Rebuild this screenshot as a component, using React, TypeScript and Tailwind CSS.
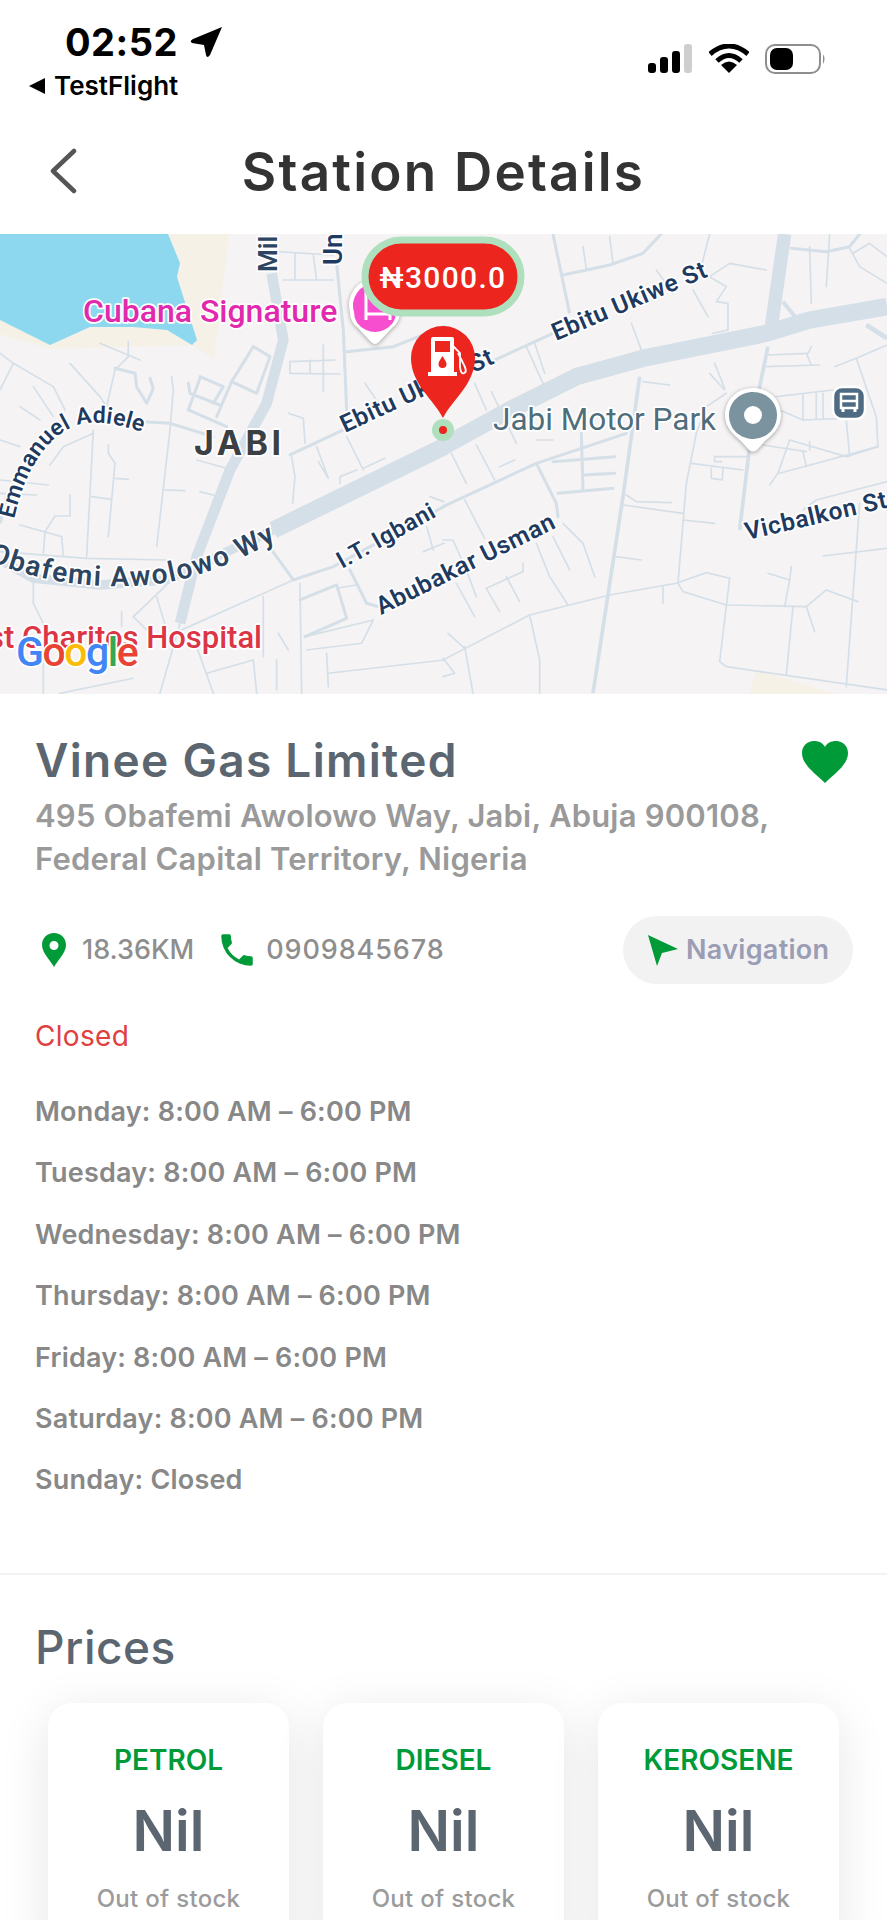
const leftThin = [
  '0,370 40,400 160,470 195,540', '40,400 0,480', '100,470 160,560', '210,400 300,500 320,530', '300,340 420,390',
  '385,335 385,380 345,420 320,530', '515,440 520,480 510,600 470,950', '60,530 120,570', '0,630 60,650', '280,600 260,980',
  '280,610 190,650 150,705', '325,645 325,670 345,700 325,920', '345,745 385,748', '275,800 335,808',
  '210,795 210,858 165,858 135,905 130,970', '60,885 185,920 190,975', '0,750 145,765', '0,790 110,795', '495,780 555,782', '600,785 650,798',
  '590,690 680,715', '850,150 1000,150', '885,70 885,150', '940,75 950,150', '830,65 1000,75', '870,395 1005,390',
  '870,430 1020,432', '870,395 870,430', '930,390 930,430', '970,345 970,485', '865,550 910,565 915,640',
  '875,680 885,740 878,820', '1095,460 1150,540', '950,650 985,745 955,695', '1020,760 1020,740 1070,720', '1090,715 1155,685',
  '1040,620 1090,720', '0,965 260,985 500,990', '100,1060 100,1120 140,1200', '880,1050 500,1220', '400,1160 500,1065',
  '400,1160 440,1200', '470,1100 500,1200', '365,1145 365,1190', '1010,1075 1070,1065', '915,1220 1120,1170 1085,1240 920,1260',
  '480,1390 540,1180', '590,1250 640,1390', '130,1250 130,1390', '180,1390 400,1345', '620,1330 760,1290 770,1390',
  '835,1210 865,1260', '830,1290 830,1380', '790,1100 790,1280', '900,1060 905,1390', '980,1270 985,1370', '985,1330 1332,1290',
  '1270,965 1332,940', '1290,800 1332,815', '1280,890 1300,960',
];

const leftMedium = [
  '345,415 405,430 410,470 440,520 460,475 450,445', '430,575 510,580 640,620', '600,440 670,470 640,520',
  '565,460 570,490 660,525', '565,540 600,445', '565,540 680,590', '760,350 810,380 770,490 695,455 760,350', '695,455 650,560',
  '1010,100 1030,300 1040,540', '1040,365 1180,350 1332,290', '870,675 1030,600', '815,960 880,1050 1000,1010 1332,830',
  '900,1110 1010,1065 1040,1165 915,1220', '1050,1020 1100,1120 1135,1130',
];

const rightThin = [
  '420,50 430,115', '500,20 510,100', '640,120 690,190', '565,280 597,365', '800,12 775,110', '860,100 970,120',
  '860,100 800,140 850,170 820,215 855,220 855,300 810,310', '750,180 795,260', '1100,50 1105,220', '1160,12 1150,170',
  '1220,55 1250,110 1332,160', '1230,70 1280,40 1332,80', '250,350 300,460', '275,340 305,430', '600,455 680,465',
  '800,430 845,480', '815,400 845,475', '975,375 1095,370 1105,350', '970,410 1130,405', '1090,370 1105,405',
  '850,490 790,530 760,610 730,760 705,1060', '1010,540 1080,570 1210,565', '1080,495 1080,570', '1120,490 1120,565',
  '1140,490 1140,565', '1000,500 1170,480', '1175,410 1240,385 1300,560 1305,650 1210,680 1040,630 1005,730 980,765',
  '1240,385 1332,345', '1210,570 1220,680', '1010,730 1305,650', '960,645 1090,665', '1100,635 1100,660', '1080,665 1090,710',
  '815,680 915,680', '815,680 815,695 835,695', '745,700 900,720', '805,715 805,745 838,750 840,715', '25,670 70,760',
  '100,645 155,750', '95,460 130,540', '145,485 220,640', '170,710 215,690', '280,630 330,630', '65,810 125,925',
  '0,930 30,930 70,1020 100,1100', '550,795 580,815 685,818', '540,825 720,850', '720,870 815,880', '520,980 595,990',
  '360,880 420,940 455,1040', '330,920 380,1020', '280,940 320,1040 375,1125', '130,1075 240,1025 240,1000', '130,1075 170,1145',
  '190,1040 230,1115', '40,1060 95,1160', '0,1290 260,1155 500,1095 700,1060 790,1028 860,1045', '260,1155 290,1290 290,1390',
  '660,1070 660,1120', '705,1060 720,1085 850,1125 1090,1130 1150,1080 1245,1115', '860,1045 830,1295 850,1310 1332,1380',
  '1250,820 1210,1370', '1050,1130 1030,1335', '975,1030 1040,1050 1045,1010', '1040,1050 1025,1130', '1090,1130 1115,1205',
  '1140,978 1332,955', '1080,840 1120,810 1332,755', '65,1250 90,1390', '15,1210 65,1255', '0,1285 35,1330 0,1340',
];

const rightMedium = [
  '360,135 500,105 600,70 655,12', '1045,55 1150,65 1220,50 1250,12', '90,420 330,310', '330,695 515,680', '415,610 420,780',
  '420,735 515,730', '345,790 510,775', '0,830 280,700 550,610', '280,700 340,820 345,860',
];

const hours = [
  'Monday: 8:00 AM – 6:00 PM',
  'Tuesday: 8:00 AM – 6:00 PM',
  'Wednesday: 8:00 AM – 6:00 PM',
  'Thursday: 8:00 AM – 6:00 PM',
  'Friday: 8:00 AM – 6:00 PM',
  'Saturday: 8:00 AM – 6:00 PM',
  'Sunday: Closed',
];

function Lines({ items, width }: { items: string[]; width: number }) {
  return (
    <>
      {items.map((p) => (
        <polyline key={p} points={p} fill="none" stroke="#d5dfe8" strokeWidth={width} strokeLinejoin="round" strokeLinecap="round" />
      ))}
    </>
  );
}

function StatusBar() {
  return (
    <div className="flex h-[116px] justify-between">
      <div className="pl-[28px] pt-[21px]">
        <div className="flex items-center pl-[37px]">
          <span className="text-[38px] leading-[42px] font-bold text-black font-['Inter',sans-serif] tracking-[0.5px]">02:52</span>
          <svg className="ml-[12px]" width="33" height="32" viewBox="0 0 33 32">
            <path d="M32 1 L20 29 Q17 33 16 29 L14 19 L2 17 Q-1 15 3 13 Z" fill="#000" />
          </svg>
        </div>
        <div className="mt-[8px] flex items-center">
          <svg width="18" height="18" viewBox="0 0 18 18">
            <path d="M17 1 V17 L1 9 Z" fill="#000" />
          </svg>
          <span className="ml-[8px] text-[26px] leading-[30px] font-semibold text-black font-['Inter',sans-serif]">TestFlight</span>
        </div>
      </div>
      <div className="flex items-start gap-[16px] pr-[60px] pt-[44px]">
        <svg width="45" height="29" viewBox="0 0 45 29">
          <rect x="0" y="19" width="8" height="10" rx="3" fill="#000" />
          <rect x="12" y="13" width="8" height="16" rx="3" fill="#000" />
          <rect x="24" y="7" width="8" height="22" rx="3" fill="#000" />
          <rect x="36" y="0" width="8" height="29" rx="3" fill="#cfcfcf" />
        </svg>
        <svg width="40" height="29" viewBox="0 0 40 29">
          <path d="M1 10 Q20 -6 39 10" fill="none" stroke="#000" strokeWidth="5" />
          <path d="M8 17 Q20 6 32 17" fill="none" stroke="#000" strokeWidth="5" />
          <path d="M12 21 Q20 14 28 21 L20 29 Z" fill="#000" />
        </svg>
        <svg width="62" height="30" viewBox="0 0 62 30">
          <rect x="1" y="1" width="54" height="28" rx="9" fill="#fff" stroke="#8e8e8e" strokeWidth="2" />
          <rect x="5" y="4" width="23" height="22" rx="7" fill="#000" />
          <path d="M58 10 Q61 15 58 20 Z" fill="#8e8e8e" />
        </svg>
      </div>
    </div>
  );
}

function Header() {
  return (
    <div className="relative flex h-[118px] items-center justify-center pb-[6px]">
      <svg className="absolute left-[48px] top-[32px]" width="30" height="46" viewBox="0 0 30 46">
        <path d="M26 3 L5 23 L26 43" fill="none" stroke="#555" strokeWidth="4.5" strokeLinecap="round" strokeLinejoin="round" />
      </svg>
      <h1 className="text-[53px] leading-[56px] font-semibold text-[#333] font-['Inter',sans-serif] tracking-[2.200px]">Station Details</h1>
    </div>
  );
}

const halo = { stroke: '#fff', strokeWidth: 3.5, paintOrder: 'stroke', strokeLinejoin: 'round' } as const;
const navy = '#1e3a5f';

function MapView() {
  return (
    <svg className="block" width="887" height="460" viewBox="0 0 887 460">
      <defs>
        <path id="emmanuel" d="M14 285 C24 240 44 206 72 193 C92 185 115 189 142 198" />
        <path id="obafemi" d="M-12 326 C40 350 110 358 170 348 C210 340 250 322 290 298" />
      </defs>
      <rect width="887" height="460" fill="#f5f3f4" />
      <polygon points="0,86 50,111 90,93 133,93 167,96 192,111 197,106 177,43 180,29 168,0 229,0 214,125 192,111 50,115 0,100" fill="#f5f1e6" />
      <polygon points="756,436 836,460 750,460" fill="#f5f1e6" />
      <polygon points="0,0 168,0 180,29 177,43 197,106 192,111 167,96 133,93 90,93 50,111 0,86" fill="#8dd8ee" />

      {/* roads traced from the crops, left half then right half */}
      <g transform="translate(0,-4) scale(0.3333)">
        <Lines items={leftThin} width={5} />
        <Lines items={leftMedium} width={9} />
        <polyline points="0,990 100,1045 300,1065 500,1050 820,900" fill="none" stroke="#d5dfe8" strokeWidth="28" />
        <polyline points="0,880 20,800" fill="none" stroke="#d5dfe8" strokeWidth="10" />
        <polyline points="815,130 850,330 800,520 690,720 590,980 540,1180" fill="none" stroke="#d5dfe8" strokeWidth="32" strokeLinejoin="round" />
        <polyline points="820,900 1332,650" fill="none" stroke="#d5dfe8" strokeWidth="52" />
      </g>
      <g transform="translate(443,-4) scale(0.3333)">
        <Lines items={rightThin} width={5} />
        <Lines items={rightMedium} width={9} />
        <polyline points="330,12 380,250" fill="none" stroke="#d5dfe8" strokeWidth="9" />
        <polyline points="590,440 540,800 450,1390" fill="none" stroke="#d5dfe8" strokeWidth="11" />
        <polyline points="975,350 950,470 920,650 890,900" fill="none" stroke="#d5dfe8" strokeWidth="11" />
        <polyline points="1025,12 985,290" fill="none" stroke="#d5dfe8" strokeWidth="40" />
        <polyline points="1020,215 1060,265" fill="none" stroke="#d5dfe8" strokeWidth="12" />
        <polyline points="1270,285 1332,325" fill="none" stroke="#d5dfe8" strokeWidth="14" />
        <polyline points="0,650 200,540 400,440 600,385 970,310 1100,270 1332,230" fill="none" stroke="#d5dfe8" strokeWidth="52" strokeLinejoin="round" />
      </g>

      <g fontFamily="Roboto, sans-serif">
        <text x="83" y="88" fontSize="32" fontWeight="500" fill="#e229ae" {...halo}>Cubana Signature</text>
        <text x="194" y="221" fontSize="34" fontWeight="700" letterSpacing="3.500" fontFamily="Inter, sans-serif" fill="#3c4043" {...halo}>JABI</text>
        <text fontSize="23" fontWeight="600" letterSpacing="0.3" fill={navy} {...halo}>
          <textPath href="#emmanuel">Emmanuel Adiele</textPath>
        </text>
        <text fontSize="28" fontWeight="600" letterSpacing="1.600" fill="#2d4560" {...halo}>
          <textPath href="#obafemi">Obafemi Awolowo Wy</textPath>
        </text>
        <text transform="translate(345,199) rotate(-25)" fontSize="24.500" fontWeight="600" letterSpacing="0.6" fill={navy} {...halo}>Ebitu Ukiwe St</text>
        <text transform="translate(556,107) rotate(-23)" fontSize="24.500" fontWeight="600" letterSpacing="0.6" fill={navy} {...halo}>Ebitu Ukiwe St</text>
        <text transform="translate(342,335) rotate(-29)" fontSize="23.500" fontWeight="600" letterSpacing="0.6" fill={navy} {...halo}>I.T. Igbani</text>
        <text transform="translate(381,381) rotate(-26.5)" fontSize="24.500" fontWeight="600" letterSpacing="0.6" fill={navy} {...halo}>Abubakar Usman</text>
        <text transform="translate(747,306) rotate(-13)" fontSize="24.500" fontWeight="600" letterSpacing="0.6" fill={navy} {...halo}>Vicbalkon St</text>
        <text transform="translate(277,38) rotate(-90)" fontSize="26" fontWeight="600" fill="#2d4560" {...halo}>Mil</text>
        <text transform="translate(342,31) rotate(-90)" fontSize="26" fontWeight="600" fill={navy} {...halo}>Un</text>
        <text x="493" y="196" fontSize="31.500" fill="#4f6d7a" {...halo}>Jabi Motor Park</text>
        <text x="-12" y="414" fontSize="31" fontWeight="500" fill="#dc3545" {...halo}>st Charitos Hospital</text>
        <text x="16" y="432" fontSize="41" fontWeight="500" letterSpacing="-1.500" {...halo}>
          <tspan fill="#4285f4">G</tspan>
          <tspan fill="#ea4335">o</tspan>
          <tspan fill="#fbbc05">o</tspan>
          <tspan fill="#4285f4">g</tspan>
          <tspan fill="#34a853">l</tspan>
          <tspan fill="#ea4335">e</tspan>
        </text>
      </g>

      {/* hotel pin, under the price tag */}
      <g className="drop-shadow-[0_1px_2px_rgba(0,0,0,0.35)]">
        <path d="M350 78 A26 26 0 1 1 400 78 Q400 88 392 94 L379 108 Q375 112 371 108 L358 94 Q350 88 350 78 Z" fill="#fff" />
        <path d="M354 78 A22 22 0 1 1 396 78 Q396 90 384 96 Q375 100 366 96 Q354 90 354 78 Z" fill="#f74ed0" />
        <path d="M366 58 V86 M366 80 H390 V86" fill="none" stroke="#fff" strokeWidth="3" />
      </g>

      {/* grey place pin */}
      <g className="drop-shadow-[0_1px_2px_rgba(0,0,0,0.35)]">
        <path d="M753 154 C769 154 781 166 781 181 C781 194 772 201 765 207 L757 216 Q753 219 749 216 L741 207 C734 201 725 194 725 181 C725 166 737 154 753 154 Z" fill="#fff" />
        <path d="M753 158 C766 158 777 168 777 181 C777 196 765 205 753 205 C741 205 729 196 729 181 C729 168 740 158 753 158 Z" fill="#7b929f" />
        <circle cx="753" cy="181" r="9" fill="#fff" />
      </g>

      {/* bus stop */}
      <rect x="833" y="153" width="32" height="32" rx="9" fill="#4f6b84" stroke="#fff" strokeWidth="2.5" />
      <path d="M841 160 H857 V174 H841 Z M841 167 H857" fill="none" stroke="#fff" strokeWidth="2.5" />
      <circle cx="845" cy="171" r="1.4" fill="#4f6b84" />
      <circle cx="853" cy="171" r="1.4" fill="#4f6b84" />
      <path d="M843 174 V178 M855 174 V178" stroke="#fff" strokeWidth="3" />

      {/* station marker */}
      <circle cx="443" cy="196" r="11" fill="#aee0bd" />
      <circle cx="443" cy="196" r="4" fill="#ec261e" />
      <path d="M443 184 C434 166 411 150 411 124 A32 32 0 0 1 475 124 C475 150 452 166 443 184 Z" fill="#ec261e" />
      <path fillRule="evenodd" d="M433 103 H452 Q454 103 454 105 V138 H457 V142 H428 V138 H431 V105 Q431 103 433 103 Z M435 107 V118 H450 V107 Z M442.500 122 C440 126 438.500 128 438.500 130 A4 4 0 0 0 446.500 130 C446.500 128 445 126 442.500 122 Z" fill="#fff" />
      <path d="M453 112 L460 119 V133 Q461 141 464 139 Q468 138 463 129 L458 119" fill="none" stroke="#fff" strokeWidth="1.8" />

      <rect x="365" y="6" width="156" height="73" rx="36.500" fill="#ec261e" stroke="#aee0bd" strokeWidth="7" />
      <text x="443" y="54" textAnchor="middle" fontFamily="Roboto, 'Noto Sans', sans-serif" fontSize="30" fontWeight="500" letterSpacing="1.300" fill="#fff">₦3000.0</text>
    </svg>
  );
}

function Details() {
  return (
    <div className="px-[35px] pt-[38px] h-[879px] font-['Inter',sans-serif]">
      <div className="flex justify-between">
        <h2 className="text-[46px] leading-[56px] font-semibold tracking-[1.300px] text-[#5b6670]">Vinee Gas Limited</h2>
        <svg className="mr-[4px] mt-[9px]" width="46" height="42" viewBox="0 0 46 42">
          <path d="M23 42 C14 33 0 24 0 12 C0 5 5 0 12 0 C17 0 21 2 23 6 C25 2 29 0 34 0 C41 0 46 5 46 12 C46 24 32 33 23 42 Z" fill="#009a38" />
        </svg>
      </div>
      <p className="mt-[6px] w-[830px] text-[31px] leading-[43px] font-semibold tracking-[0.200px] text-[#9a9a9a]">
        495 Obafemi Awolowo Way, Jabi, Abuja 900108,
        <br />
        Federal Capital Territory, Nigeria
      </p>
      <div className="mt-[36px] flex h-[68px] items-center">
        <svg className="ml-[7px]" width="24" height="34" viewBox="0 0 24 34">
          <path fillRule="evenodd" d="M12 0 C19 0 24 5 24 12 C24 20 15 28 12 34 C9 28 0 20 0 12 C0 5 5 0 12 0 Z M12 8 A4.500 4.500 0 1 0 12 17 A4.500 4.500 0 1 0 12 8 Z" fill="#009a38" />
        </svg>
        <span className="ml-[16px] text-[27px] font-medium text-[#8e8e8e]">18.36KM</span>
        <svg className="ml-[22px]" width="42" height="42" viewBox="0 0 24 24">
          <path d="M6.600 10.800 a15.100 15.100 0 0 0 6.600 6.600 l2.200-2.200 a1 1 0 0 1 1-.25 11.400 11.400 0 0 0 3.600.57 1 1 0 0 1 1 1 V20 a1 1 0 0 1-1 1 A17 17 0 0 1 3 4 a1 1 0 0 1 1-1 h3.500 a1 1 0 0 1 1 1 c0 1.250.2 2.450.57 3.570 a1 1 0 0 1-.25 1 z" fill="#009a38" />
        </svg>
        <span className="ml-[8px] text-[27px] font-medium tracking-[0.900px] text-[#8e8e8e]">0909845678</span>
        <div className="ml-auto mr-[-1px] flex h-[68px] w-[230px] items-center rounded-full bg-[#f2f2f3] pl-[24px]">
          <svg width="31" height="31" viewBox="0 0 31 31">
            <path d="M1 0 L31 14 L15 18 L10 31 Z" fill="#009a38" />
          </svg>
          <span className="ml-[8px] text-[27px] font-semibold tracking-[0.300px] text-[#9a9db3]">Navigation</span>
        </div>
      </div>
      <p className="mt-[34px] text-[28px] leading-[36px] tracking-[0.300px] text-[#e04040]">Closed</p>
      <div className="mt-[38px] flex flex-col gap-[21.400px]">
        {hours.map((h) => (
          <p key={h} className="text-[27px] leading-[40px] font-semibold tracking-[0.200px] text-[#888]">{h}</p>
        ))}
      </div>
    </div>
  );
}

function PriceCard({ name }: { name: string }) {
  return (
    <div className="flex h-[260px] w-[241px] flex-col items-center rounded-[24px] bg-white pt-[40px] shadow-[0_10px_50px_rgba(0,0,0,0.1)]">
      <span className="text-[28px] leading-[34px] font-semibold text-[#009a38]">{name}</span>
      <span className="mt-[22px] text-[56px] leading-[64px] font-semibold text-[#5b6670]">Nil</span>
      <span className="mt-[21px] text-[24px] leading-[30px] font-medium tracking-[0.300px] text-[#9b9b9b]">Out of stock</span>
    </div>
  );
}

function Prices() {
  return (
    <div className="border-t-2 border-[#f3f3f3] font-['Inter',sans-serif]">
      <h2 className="pl-[35px] pt-[44px] text-[46px] leading-[56px] font-medium tracking-[0.500px] text-[#5b6670]">Prices</h2>
      <div className="mt-[28px] flex gap-[34px] pl-[48px]">
        <PriceCard name="PETROL" />
        <PriceCard name="DIESEL" />
        <PriceCard name="KEROSENE" />
      </div>
    </div>
  );
}

export default function App() {
  return (
    <div className="h-[1920px] w-[887px] overflow-hidden bg-white">
      <StatusBar />
      <Header />
      <MapView />
      <Details />
      <Prices />
    </div>
  );
}
